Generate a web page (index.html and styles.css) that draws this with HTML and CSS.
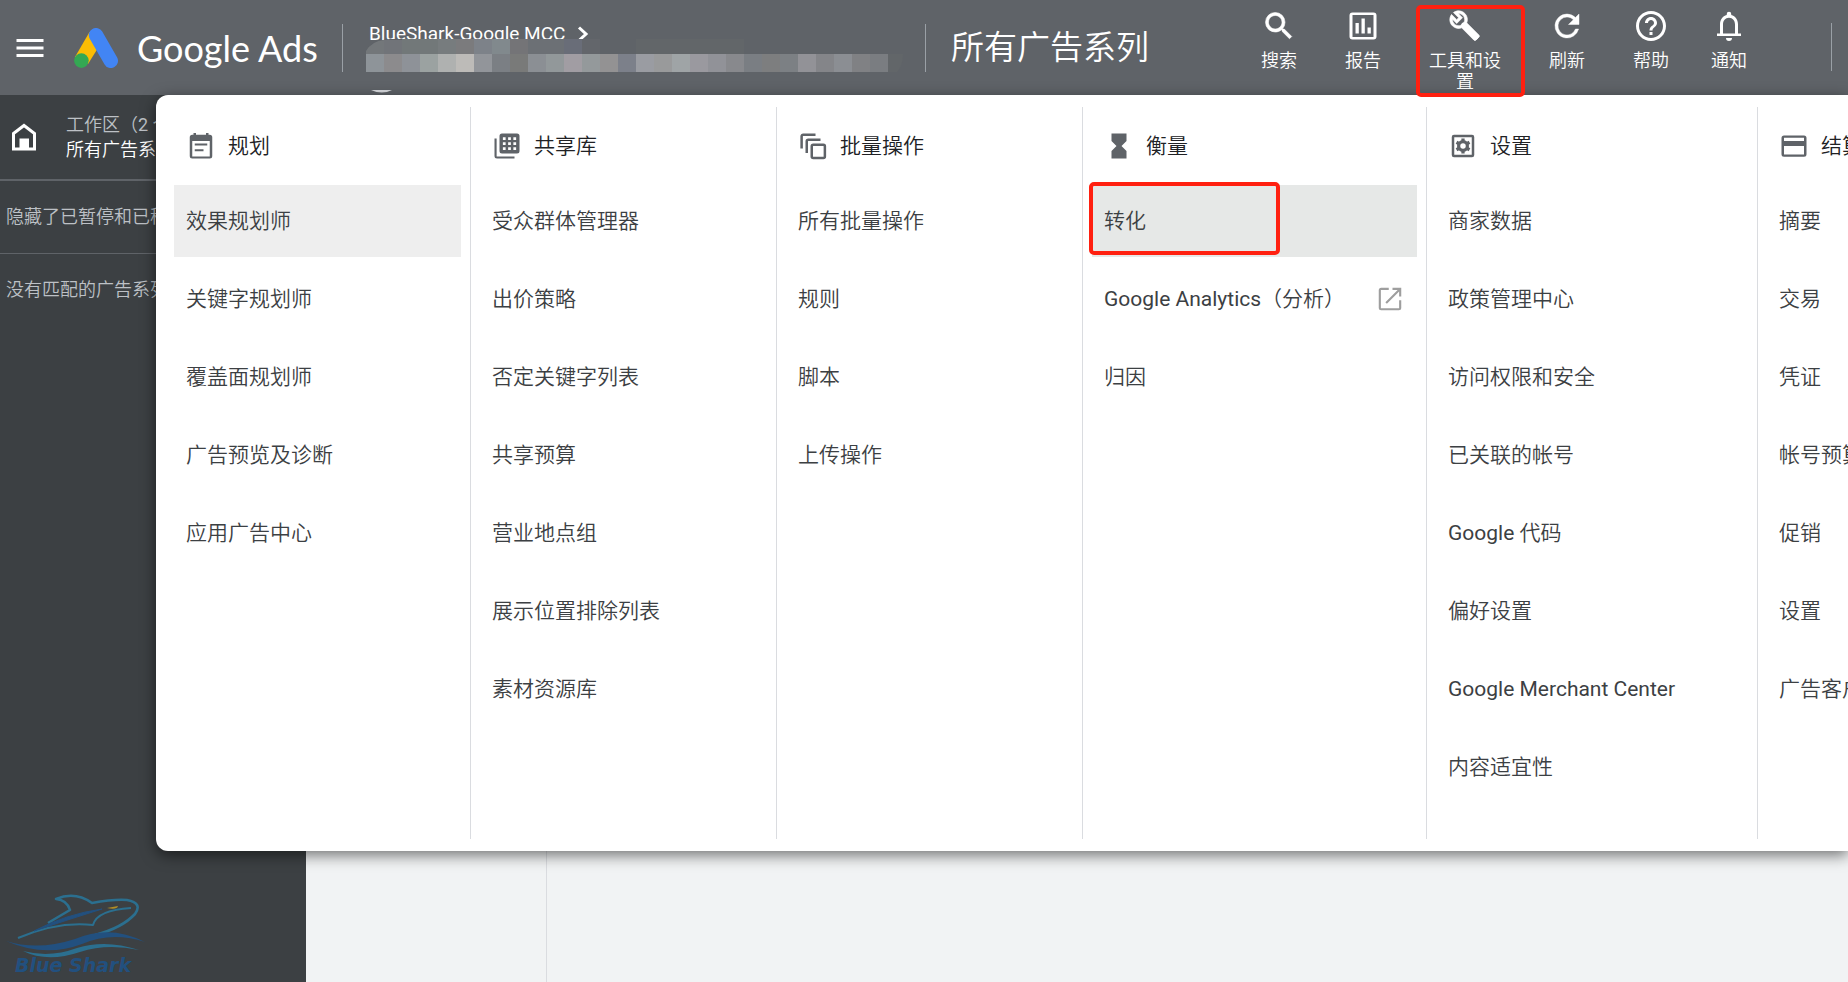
FILE: index.html
```html
<!DOCTYPE html>
<html lang="zh-CN">
<head>
<meta charset="utf-8">
<title>Google Ads</title>
<link rel="stylesheet" href="styles.css">
</head>
<body>
<header class="topbar">
  <button class="menu-btn" aria-label="菜单"><svg class="icon-lg" viewBox="0 0 24 24"><path d="M3 18h18v-2H3v2zm0-5h18v-2H3v2zm0-7v2h18V6H3z"/></svg></button>
  <a class="brand" href="#">
    <svg class="brand-mark" viewBox="0 0 44 40" aria-hidden="true">
      <path d="M15.500 4 L29 12 L14 36 L1 29z" fill="#fbbc04"/>
      <path d="M22 7.200 L36.800 32.800" stroke="#4285f4" stroke-width="14.400" stroke-linecap="round"/>
      <circle cx="7.400" cy="32.600" r="7.300" fill="#34a853"/>
    </svg>
    <span class="brand-name">Google Ads</span>
  </a>
  <div class="account">
    <a class="account-name" href="#">BlueShark-Google MCC<svg class="chevron" viewBox="0 0 12 16"><path d="M2 1.500l7 6.500-7 6.500" fill="none" stroke="#fff" stroke-width="3"/></svg></a>
    <svg class="mosaic" viewBox="0 0 540 54" aria-hidden="true">
      <path d="M0 12Q6 1 24 0H378V16H0z" fill="#5f6368"/>
      <path d="M0 12Q6 2 18 1V15H0z" fill="#73777a"/>
      <path d="M18 1h18v14H18z" fill="#717479"/><path d="M36 0h36v15H36z" fill="#727879"/>
      <path d="M72 0h18v15H72z" fill="#777c7e"/><path d="M90 0h18v15H90z" fill="#7b7b7d"/><path d="M108 0h18v15h-18z" fill="#7d8289"/>
      <path d="M126 0h18v15h-18z" fill="#81898d"/><path d="M144 0h18v15h-18z" fill="#747477"/><path d="M162 0h36v15h-36z" fill="#6c7075"/>
      <path d="M198 0h18v15h-18z" fill="#696d78"/><path d="M216 0h18v15h-18z" fill="#63666b"/><path d="M270 0h108v15H270z" fill="#626669"/>
      <g>
        <path d="M0 15h18v18H0z" fill="#8e9499"/><path d="M18 15h18v18H18z" fill="#8c8b8d"/><path d="M36 15h18v18H36z" fill="#8e9298"/><path d="M54 15h18v18H54z" fill="#9ba2a1"/>
        <path d="M72 15h18v18H72z" fill="#afb1b0"/><path d="M90 15h18v18H90z" fill="#bdbbb8"/><path d="M108 15h18v18h-18z" fill="#92959a"/><path d="M126 15h18v18h-18z" fill="#7b7f84"/>
        <path d="M144 15h18v18h-18z" fill="#797a79"/><path d="M162 15h18v18h-18z" fill="#8b8f94"/><path d="M180 15h18v18h-18z" fill="#92989a"/><path d="M198 15h18v18h-18z" fill="#a19da3"/>
        <path d="M216 15h18v18h-18z" fill="#94999b"/><path d="M234 15h18v18h-18z" fill="#939293"/><path d="M252 15h18v18h-18z" fill="#7c808a"/><path d="M270 15h18v18h-18z" fill="#9a9ca2"/>
        <path d="M288 15h18v18h-18z" fill="#999a9b"/><path d="M306 15h18v18h-18z" fill="#9fa4a6"/><path d="M324 15h18v18h-18z" fill="#9a999f"/><path d="M342 15h18v18h-18z" fill="#919298"/>
        <path d="M360 15h18v18h-18z" fill="#88898d"/><path d="M378 15h18v18h-18z" fill="#7a7e83"/><path d="M396 15h18v18h-18z" fill="#7d7e7f"/><path d="M414 15h18v18h-18z" fill="#7c8084"/>
        <path d="M432 15h18v18h-18z" fill="#929297"/><path d="M450 15h18v18h-18z" fill="#848589"/><path d="M468 15h18v18h-18z" fill="#8b8e93"/><path d="M486 15h18v18h-18z" fill="#808184"/><path d="M504 15h18v18h-18z" fill="#7a7d81"/>
      </g>
      <path d="M522 15h15q0 12-6 18h-9z" fill="#626669"/>
      <path d="M5 51H26Q16 56 5 51z" fill="#dadce0"/>
    </svg>
  </div>
  <h1 class="page-title">所有广告系列</h1>
  <nav class="tools">
    <button class="tool"><svg class="icon-lg" viewBox="0 0 24 24"><path d="M15.500 14h-.79l-.28-.27A6.471 6.471 0 0 0 16 9.500 6.500 6.500 0 1 0 9.500 16c1.610 0 3.090-.59 4.230-1.570l.27.28v.79l5 4.990L20.490 19l-4.990-5zm-6 0C7.010 14 5 11.990 5 9.500S7.010 5 9.500 5 14 7.010 14 9.500 11.990 14 9.500 14z" stroke="#fff" stroke-width=".4"/></svg>搜索</button>
    <button class="tool"><svg class="icon-lg" viewBox="0 0 24 24"><path d="M5 3h14a2 2 0 0 1 2 2v14a2 2 0 0 1-2 2H5a2 2 0 0 1-2-2V5a2 2 0 0 1 2-2zm0 1.700v14.600h14V4.700zM7 10h2.200v7H7zm4-3h2.200v10H11zm4 6h2.200v4H15z" fill-rule="evenodd"/></svg>报告</button>
    <button class="tool tool-active"><svg class="icon-lg" viewBox="0 0 24 24"><g transform="translate(1 1) scale(.9)"><path d="M22.610 18.990l-9.080-9.080c.93-2.340.45-5.100-1.440-7C9.790.61 6.210.4 3.660 2.260L7.500 6.110 6.080 7.520 2.250 3.690C.39 6.230.6 9.820 2.900 12.110c1.860 1.860 4.570 2.350 6.890 1.480l9.110 9.110c.39.39 1.020.39 1.410 0l2.300-2.300c.4-.38.4-1.010 0-1.410zm-3 1.600l-9.460-9.460c-.61.45-1.290.72-2 .82-1.360.2-2.790-.21-3.830-1.250C3.370 9.760 2.930 8.500 3 7.260l3.090 3.090 4.240-4.240-3.090-3.090c1.240-.07 2.490.37 3.440 1.310 1.080 1.080 1.490 2.570 1.240 3.960-.12.71-.42 1.370-.88 1.960l9.450 9.450-.88.89z" stroke="#fff" stroke-width=".5"/><path d="M11.500 11.500L20.200 20.200" stroke="#fff" stroke-width="4" stroke-linecap="round"/></g></svg>工具和设置</button>
    <button class="tool"><svg class="icon-lg" viewBox="0 0 24 24"><path d="M17.650 6.350A7.958 7.958 0 0 0 12 4a8 8 0 1 0 7.730 10h-2.080A6 6 0 1 1 12 6c1.660 0 3.140.69 4.220 1.780L13 11h7V4l-2.350 2.350z" stroke="#fff" stroke-width=".3"/></svg>刷新</button>
    <button class="tool"><svg class="icon-lg" viewBox="0 0 24 24"><path d="M11 18h2v-2h-2v2zm1-16C6.480 2 2 6.480 2 12s4.480 10 10 10 10-4.480 10-10S17.520 2 12 2zm0 18c-4.410 0-8-3.590-8-8s3.590-8 8-8 8 3.590 8 8-3.590 8-8 8zm0-14c-2.210 0-4 1.790-4 4h2c0-1.100.9-2 2-2s2 .9 2 2c0 2-3 1.750-3 5h2c0-2.250 3-2.500 3-5 0-2.210-1.790-4-4-4z"/></svg>帮助</button>
    <button class="tool tool-last"><svg class="icon-lg" viewBox="0 0 24 24"><path d="M10 20h4a2 2 0 0 1-4 0zM18 17v-6c0-3.070-1.630-5.640-4.500-6.320V4a1.500 1.500 0 0 0-3 0v.68C7.640 5.360 6 7.920 6 11v6H4v1.700h16V17zm-2 0H8v-6c0-2.480 1.510-4.500 4-4.500s4 2.020 4 4.500z"/></svg>通知</button>
  </nav>
</header>

<div class="workspace">
  <aside class="sidebar">
    <a class="scope" href="#">
      <svg class="home" viewBox="0 0 26 28"><path d="M2.500 10.500L13 2.500 23.500 10.500V26H2.500z" fill="none" stroke="#fff" stroke-width="3"/><path d="M8.500 15.500h9.500v11H8.500z" fill="#fff"/></svg>
      <span class="scope-text"><span class="scope-hint">工作区（2 个）</span><span>所有广告系列</span></span>
    </a>
    <p class="side-note">隐藏了已暂停和已移除的广告系列</p>
    <p class="side-note side-empty">没有匹配的广告系列</p>
    <svg class="shark" viewBox="0 0 145 86" role="img" aria-label="Blue Shark">
      <g fill="none" stroke="#2b6f8f" stroke-linejoin="round">
        <path d="M48 29Q58 23 70 16Q67 6 56 5Q75-3 92 9Q114 5 127 6Q143 9 135 20Q122 34 95 41" stroke-width="2.600"/>
        <path d="M18 44Q58 27 93 31Q97 16 131 14" stroke-width="2"/>
      </g>
      <path d="M34 37Q66 20 102 15Q70 25 34 37z" fill="#22507f" stroke="#22507f"/>
      <path d="M107 14L118 12Q117 16 107 14z" fill="#b08d25"/>
      <path d="M6 47Q38 57 75 45Q110 30 145 48Q112 37 82 50Q45 64 6 47z" fill="#22507f"/>
      <path d="M23 57Q50 64 77 54Q106 45 139 56Q107 49 80 58Q47 69 23 57z" fill="#2b6f8f"/>
      <text class="shark-text" x="15" y="78">Blue Shark</text>
    </svg>
  </aside>
  <div class="subnav"></div>
  <main class="content"></main>
</div>

<nav class="mega" aria-label="工具和设置">
  <section class="col">
    <h2 class="col-title"><svg class="icon" viewBox="0 0 24 24"><path d="M17 10H7v1.600h10V10zm2-7h-1V1.500h-2V3H8V1.500H6V3H5a2 2 0 0 0-2 2v15a2 2 0 0 0 2 2h14a2 2 0 0 0 2-2V5a2 2 0 0 0-2-2zm0 17.300H5V8h14v12.300zM14 14.500H7v1.600h7z"/></svg>规划</h2>
    <a class="item item-hover" href="#">效果规划师</a>
    <a class="item" href="#">关键字规划师</a>
    <a class="item" href="#">覆盖面规划师</a>
    <a class="item" href="#">广告预览及诊断</a>
    <a class="item" href="#">应用广告中心</a>
  </section>
  <section class="col">
    <h2 class="col-title"><svg class="icon" viewBox="0 0 24 24"><path d="M3.700 6H2v14a2 2 0 0 0 2 2h14v-1.700H3.700zM8 2h12a2 2 0 0 1 2 2v12a2 2 0 0 1-2 2H8a2 2 0 0 1-2-2V4a2 2 0 0 1 2-2zm.7 3v2.200h2.200V5zm4.200 0v2.200h2.200V5zm4.200 0v2.200h2.200V5zM8.700 9v2.200h2.200V9zm4.200 0v2.200h2.200V9zm4.200 0v2.200h2.200V9zm-8.400 4v2.200h2.200V13zm4.200 0v2.200h2.200V13zm4.200 0v2.200h2.200V13z" fill-rule="evenodd"/></svg>共享库</h2>
    <a class="item" href="#">受众群体管理器</a>
    <a class="item" href="#">出价策略</a>
    <a class="item" href="#">否定关键字列表</a>
    <a class="item" href="#">共享预算</a>
    <a class="item" href="#">营业地点组</a>
    <a class="item" href="#">展示位置排除列表</a>
    <a class="item" href="#">素材资源库</a>
  </section>
  <section class="col">
    <h2 class="col-title"><svg class="icon" viewBox="0 0 24 24"><g fill="none" stroke="#5f6368" stroke-width="2"><rect x="11" y="11" width="10.500" height="10.500" rx="1.200"/><path d="M7 17.500V8.200A1.200 1.200 0 0 1 8.200 7H18M2.900 14V4.100A1.200 1.200 0 0 1 4.100 2.900H14"/></g></svg>批量操作</h2>
    <a class="item" href="#">所有批量操作</a>
    <a class="item" href="#">规则</a>
    <a class="item" href="#">脚本</a>
    <a class="item" href="#">上传操作</a>
  </section>
  <section class="col col-wide">
    <h2 class="col-title"><svg class="icon" viewBox="0 0 24 24"><path d="M6 2v6h.010L6 8.010 10 12l-4 4 .010.010H6V22h12v-5.990h-.010L18 16l-4-4 4-3.990-.010-.010H18V2H6z"/></svg>衡量</h2>
    <a class="item item-marked" href="#">转化</a>
    <a class="item" href="#">Google Analytics（分析）<svg class="icon external" viewBox="0 0 24 24"><path d="M19.300 19.300H4.700V4.700H11V3H5a2 2 0 0 0-2 2v14a2 2 0 0 0 2 2h14a2 2 0 0 0 2-2v-6h-1.700zM14 3v1.700h4.100l-9.800 9.800 1.200 1.200 9.800-9.800V10H21V3z"/></svg></a>
    <a class="item" href="#">归因</a>
  </section>
  <section class="col col-mid">
    <h2 class="col-title"><svg class="icon" viewBox="0 0 24 24"><rect x="4" y="4" width="16" height="16" rx=".8" fill="none" stroke="#5f6368" stroke-width="2"/><circle cx="12" cy="12" r="3.500" fill="none" stroke="#5f6368" stroke-width="2.600"/><path d="M12 6v12M6.800 9l10.400 6M6.800 15l10.400-6" fill="none" stroke="#5f6368" stroke-width="2.600"/><circle cx="12" cy="12" r="2.200" fill="#fff"/></svg>设置</h2>
    <a class="item" href="#">商家数据</a>
    <a class="item" href="#">政策管理中心</a>
    <a class="item" href="#">访问权限和安全</a>
    <a class="item" href="#">已关联的帐号</a>
    <a class="item" href="#">Google 代码</a>
    <a class="item" href="#">偏好设置</a>
    <a class="item" href="#">Google Merchant Center</a>
    <a class="item" href="#">内容适宜性</a>
  </section>
  <section class="col col-last">
    <h2 class="col-title"><svg class="icon" viewBox="0 0 24 24"><path d="M20 3.500H4a2 2 0 0 0-2 2v13a2 2 0 0 0 2 2h16a2 2 0 0 0 2-2v-13a2 2 0 0 0-2-2zm0 15.200H4V12h16zM20 8H4V5.300h16z"/></svg>结算</h2>
    <a class="item" href="#">摘要</a>
    <a class="item" href="#">交易</a>
    <a class="item" href="#">凭证</a>
    <a class="item" href="#">帐号预算</a>
    <a class="item" href="#">促销</a>
    <a class="item" href="#">设置</a>
    <a class="item" href="#">广告客户验证</a>
  </section>
</nav>
</body>
</html>
```
FILE: styles.css
```css
*, *::before, *::after { box-sizing: border-box; }

body {
  margin: 0;
  min-height: 100vh;
  display: flex;
  flex-direction: column;
  position: relative;
  font-family: Roboto, "Noto Sans CJK SC DemiLight", "Noto Sans CJK SC Light", "Noto Sans CJK SC", sans-serif;
  font-size: 18px;
  font-weight: 400;
  color: #3c4043;
}

h1, h2, p { margin: 0; font-weight: inherit; }
a { color: inherit; text-decoration: none; }
button { border: 0; background: none; font: inherit; color: inherit; cursor: pointer; }
svg { display: block; flex: none; fill: currentColor; }

.icon { width: 30px; height: 30px; }
.icon-lg { width: 36px; height: 36px; }

/* Top bar */
.topbar {
  height: 95px;
  display: flex;
  align-items: center;
  padding: 0 16px 0 12px;
  background: #5f6368;
  color: #fff;
}
.menu-btn { padding: 0; }
.brand { display: flex; align-items: center; gap: 19px; margin-left: 26px; }
.brand-mark { width: 44px; height: 40px; }
.brand-name { width: 179px; font-family: Lato, sans-serif; font-size: 36px; line-height: 46px; white-space: nowrap; }
.account {
  position: relative;
  height: 48px;
  width: 584px;
  margin-left: 26px;
  padding-left: 26px;
  border: solid #9aa0a6;
  border-width: 0 1px;
}
.account-name { display: flex; align-items: center; gap: 12px; font-size: 19px; line-height: 20px; }
.chevron { width: 12px; height: 16px; }
.mosaic { position: absolute; left: 23px; top: 15px; width: 540px; height: 54px; }
.page-title { margin-left: 25px; font-size: 33px; line-height: 48px; white-space: nowrap; }

.tools {
  display: flex;
  align-self: stretch;
  align-items: flex-start;
  margin-left: auto;
  padding-right: 67px;
  position: relative;
}
.tools::after {
  content: "";
  position: absolute;
  right: 0;
  top: 23px;
  height: 48px;
  border-right: 1px solid #9aa0a6;
}
.tool {
  display: flex;
  flex-direction: column;
  align-items: center;
  gap: 6px;
  width: 84px;
  padding: 8px 0 0;
  line-height: 21px;
}
.tool-last { width: 72px; }
.tool-active { width: 120px; padding: 8px 18px 0; position: relative; }
.tool-active::after {
  content: "";
  position: absolute;
  z-index: 3;
  left: 11px;
  top: 5px;
  width: 109px;
  height: 92px;
  border: 4px solid #ff2010;
  border-radius: 5px;
}

/* Page behind the menu */
.workspace { flex: 1; display: flex; background: #f1f3f4; }
.sidebar {
  width: 306px;
  display: flex;
  flex-direction: column;
  background: #3c4043;
  color: #bdc1c6;
  white-space: nowrap;
}
.scope {
  height: 86px;
  display: flex;
  align-items: center;
  gap: 29px;
  padding-left: 11px;
  border-bottom: 2px solid #5f6368;
  color: #fff;
}
.home { width: 26px; height: 28px; }
.scope-text { display: flex; flex-direction: column; line-height: 25px; }
.scope-hint { color: #bdc1c6; }
.side-note { padding-left: 6px; line-height: 72px; border-bottom: 1px solid #5f6368; }
.side-empty { border: 0; }
.shark { width: 145px; height: 86px; margin: auto 0 2px 0; }
.shark-text { font: italic bold 19px "DejaVu Sans", sans-serif; fill: #22507f; }
.subnav { width: 241px; border-right: 1px solid #dadce0; }
.content { flex: 1; }

/* Tools menu */
.mega {
  position: absolute;
  z-index: 2;
  left: 156px;
  right: 0;
  top: 95px;
  display: flex;
  padding: 12px 0 12px 9px;
  background: #fff;
  border-radius: 12px 0 0 12px;
  box-shadow: 0 4px 15px rgba(0, 0, 0, .55);
}
.col {
  flex: none;
  width: 306px;
  padding: 0 9px 30px;
  border-right: 1px solid #dadce0;
}
.col-wide { width: 344px; }
.col-mid { width: 331px; }
.col-last { flex: 1; min-width: 0; padding-right: 0; border: 0; overflow: hidden; }
.col-title {
  height: 78px;
  display: flex;
  align-items: center;
  gap: 12px;
  padding-left: 12px;
  font-size: 21px;
  line-height: 24px;
  white-space: nowrap;
  color: #202124;
}
.col-title .icon { color: #5f6368; }
.item {
  height: 72px;
  display: flex;
  align-items: center;
  margin-bottom: 6px;
  padding: 0 12px;
  font-size: 21px;
  line-height: 24px;
  white-space: nowrap;
}
.item-hover { background: #eee; }
.item-marked { position: relative; background: #e6e8e7; }
.item-marked::after {
  content: "";
  position: absolute;
  left: -3px;
  top: -3px;
  width: 191px;
  height: 73px;
  border: 4px solid #ff2010;
  border-radius: 5px;
}
.external { margin-left: auto; color: #9e9e9e; }
```
